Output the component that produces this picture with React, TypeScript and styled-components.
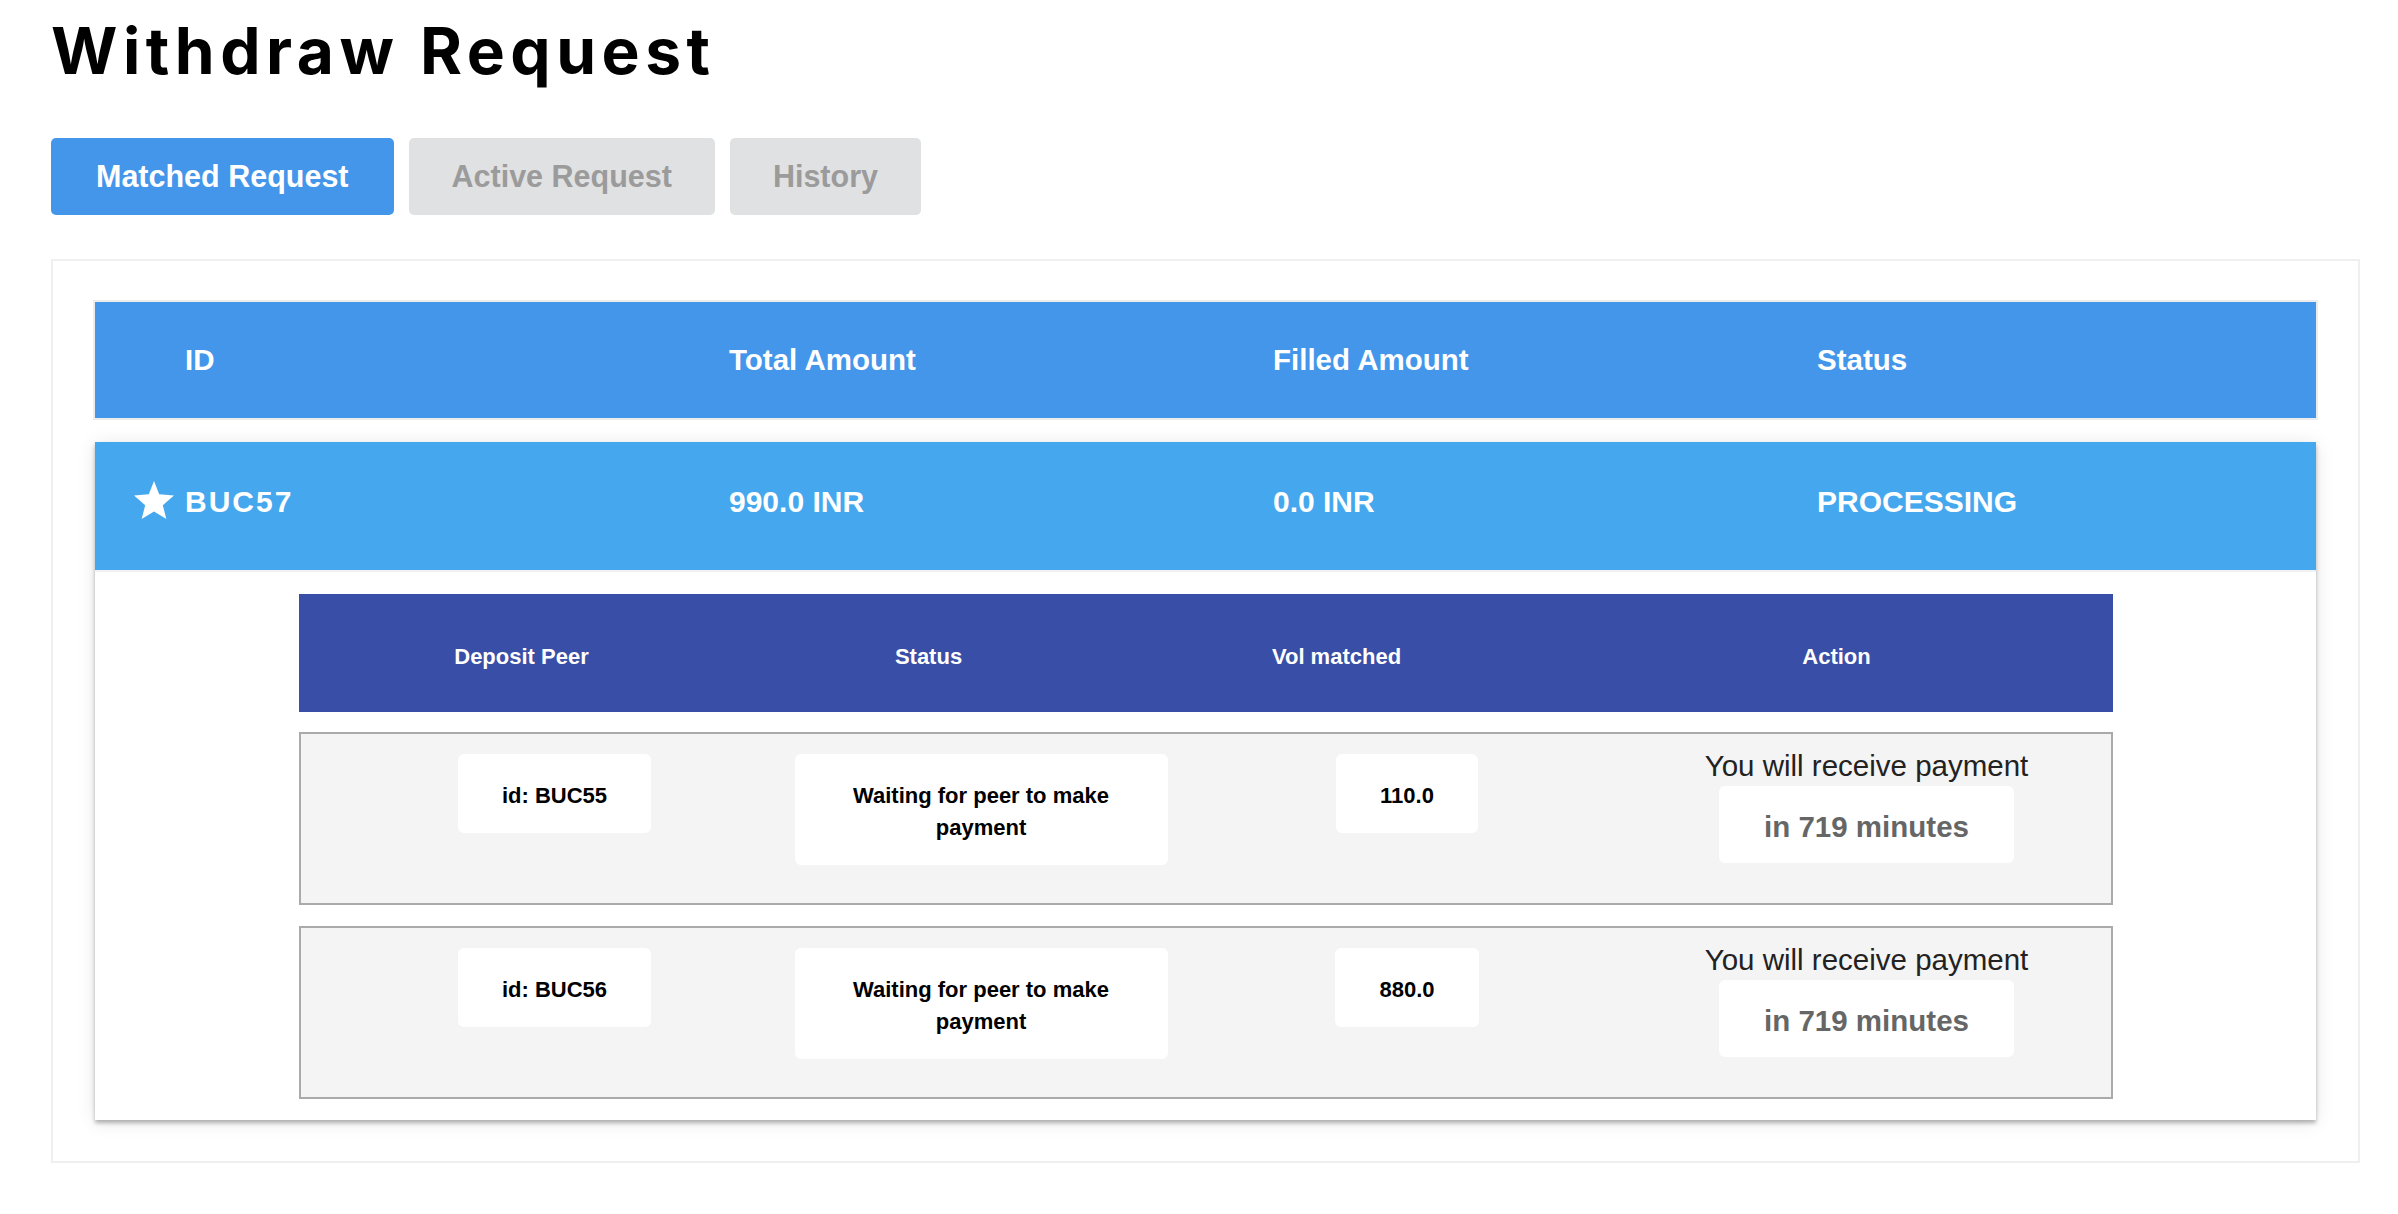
import React from 'react';
import styled, { createGlobalStyle } from 'styled-components';

interface Match {
  peer: string;
  status: string;
  volume: string;
  minutes: number;
}

const GlobalStyle = createGlobalStyle`
  body {
    margin: 0;
    background: #fff;
    font-family: "Liberation Sans", Arial, sans-serif;
  }
`;

const Page = styled.div`
  padding: 19px 38px 40px 51px;
`;

const Title = styled.h1`
  margin: 0;
  font-family: Inter, "Noto Sans", sans-serif;
  font-weight: 700;
  font-size: 64px;
  line-height: 64px;
  letter-spacing: 5.5px;
  color: #000;
`;

const Tabs = styled.div`
  display: flex;
  gap: 15px;
  margin-top: 55px;
`;

const TabButton = styled.button<{ $active?: boolean }>`
  height: 77px;
  padding: 0 ${(p) => (p.$active ? '45px' : '43px')};
  border: none;
  border-radius: 5px;
  background: ${(p) => (p.$active ? '#4396ea' : '#e0e1e3')};
  color: ${(p) => (p.$active ? '#fff' : '#9b9b9b')};
  font-family: "Liberation Sans", Arial, sans-serif;
  font-weight: bold;
  font-size: 30.5px;
  cursor: pointer;
`;

const Panel = styled.div`
  margin-top: 44px;
  border: 2px solid #efefef;
  padding: 41px 42px;
`;

const HeaderBar = styled.div`
  display: grid;
  grid-template-columns: 544px 544px 544px 1fr;
  align-items: center;
  height: 116px;
  padding-left: 90px;
  background: #4396ea;
  box-shadow: 0 0 0 2px #ececec;
  color: #fff;
  font-weight: bold;
  font-size: 29.5px;
`;

const Card = styled.div`
  margin-top: 24px;
  background: #fff;
  padding-bottom: 21px;
  box-shadow: 0 3px 4px rgba(0, 0, 0, 0.28), 0 2px 18px rgba(0, 0, 0, 0.1);
`;

const RowBar = styled.div`
  display: grid;
  grid-template-columns: 595px 544px 544px 1fr;
  align-items: center;
  box-sizing: border-box;
  height: 130px;
  padding: 0 0 9px 39px;
  background: #45a8ee;
  border-bottom: 2px solid #f2f2f2;
  color: #fff;
  font-weight: bold;
  font-size: 30px;
`;

const IdCell = styled.div`
  display: flex;
  align-items: center;
  gap: 11px;
  letter-spacing: 2px;

  svg {
    margin-top: -4px;
  }
`;

const InnerTable = styled.div`
  width: 1814px;
  margin: 22px auto 0;
`;

const InnerHeader = styled.div`
  display: grid;
  grid-template-columns: 446px 368px 448px 1fr;
  align-items: center;
  justify-items: center;
  box-sizing: border-box;
  height: 118px;
  padding-top: 8px;
  background: #394ea6;
  color: #fff;
  font-weight: bold;
  font-size: 22px;
`;

const MatchRow = styled.div`
  display: grid;
  grid-template-columns: 432px 421px 431px 1fr;
  align-items: start;
  justify-items: center;
  margin-top: 20px;
  padding: 20px 0 38px 38px;
  border: 2px solid #aaa;
  background: #f4f4f4;

  & + & {
    margin-top: 21px;
  }
`;

const Chip = styled.div<{ $wide?: boolean }>`
  box-sizing: border-box;
  width: ${(p) => (p.$wide ? '373px' : 'auto')};
  padding: 26px ${(p) => (p.$wide ? '40px' : '44px')} 21px;
  border-radius: 6px;
  background: #fff;
  color: #000;
  font-weight: bold;
  font-size: 22px;
  line-height: 32px;
  text-align: center;
`;

const ActionCell = styled.div`
  display: flex;
  flex-direction: column;
  align-items: center;
`;

const ActionText = styled.div`
  color: #222;
  font-size: 29.5px;
  line-height: 24px;
`;

const Countdown = styled.div`
  margin-top: 8px;
  padding: 24px 45px 20px;
  border-radius: 6px;
  background: #fff;
  color: #666;
  font-weight: bold;
  font-size: 29.5px;
  line-height: 33px;
`;

function Star() {
  return (
    <svg width="40" height="38" viewBox="2 2 20 19.02">
      <polygon
        fill="#fff"
        points="12,2 14.6,8.6 22,9.27 16.4,14.1 18.18,21.02 12,17.3 5.82,21.02 7.6,14.1 2,9.27 9.4,8.6"
      />
    </svg>
  );
}

const matches: Match[] = [
  { peer: 'BUC55', status: 'Waiting for peer to make payment', volume: '110.0', minutes: 719 },
  { peer: 'BUC56', status: 'Waiting for peer to make payment', volume: '880.0', minutes: 719 },
];

export default function App() {
  return (
    <>
      <GlobalStyle />
      <Page>
        <Title>Withdraw Request</Title>
        <Tabs>
          <TabButton $active>Matched Request</TabButton>
          <TabButton>Active Request</TabButton>
          <TabButton>History</TabButton>
        </Tabs>
        <Panel>
          <HeaderBar>
            <span>ID</span>
            <span>Total Amount</span>
            <span>Filled Amount</span>
            <span>Status</span>
          </HeaderBar>
          <Card>
            <RowBar>
              <IdCell>
                <Star />
                BUC57
              </IdCell>
              <span>990.0 INR</span>
              <span>0.0 INR</span>
              <span>PROCESSING</span>
            </RowBar>
            <InnerTable>
              <InnerHeader>
                <span>Deposit Peer</span>
                <span>Status</span>
                <span>Vol matched</span>
                <span>Action</span>
              </InnerHeader>
              {matches.map((m) => (
                <MatchRow key={m.peer}>
                  <Chip>id: {m.peer}</Chip>
                  <Chip $wide>{m.status}</Chip>
                  <Chip>{m.volume}</Chip>
                  <ActionCell>
                    <ActionText>You will receive payment</ActionText>
                    <Countdown>in {m.minutes} minutes</Countdown>
                  </ActionCell>
                </MatchRow>
              ))}
            </InnerTable>
          </Card>
        </Panel>
      </Page>
    </>
  );
}
